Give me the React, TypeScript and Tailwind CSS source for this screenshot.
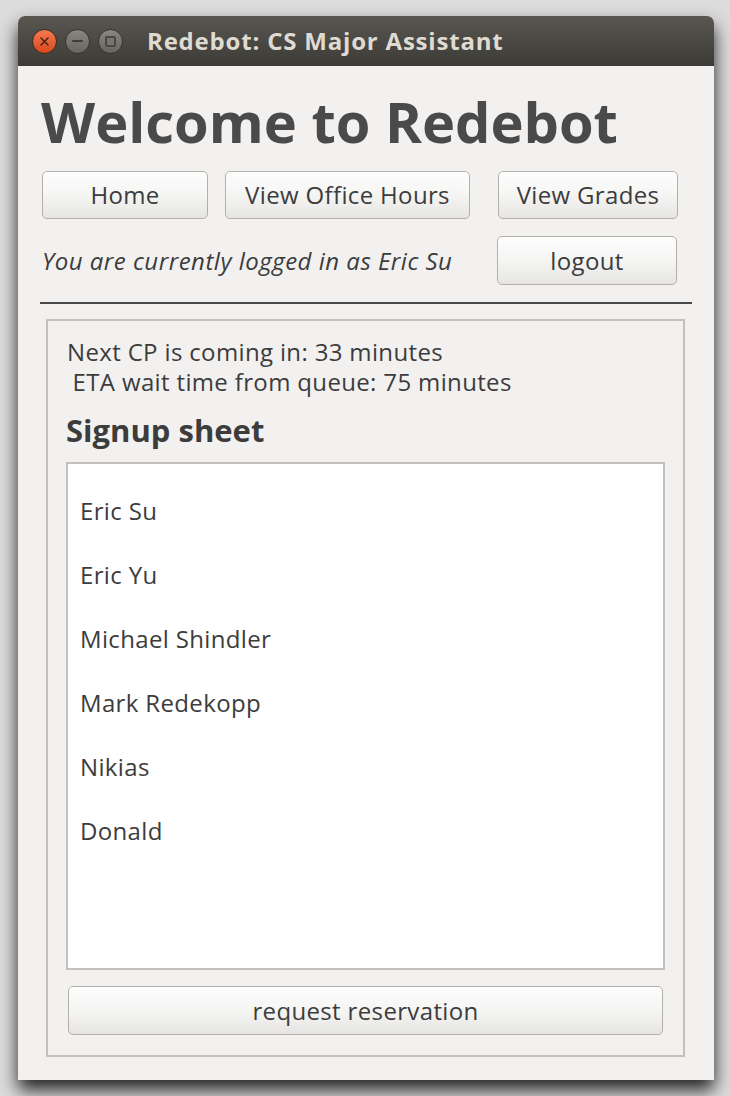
import React from 'react';

const names = ['Eric Su', 'Eric Yu', 'Michael Shindler', 'Mark Redekopp', 'Nikias', 'Donald'];

function GtkButton({ label, className }: { label: string; className?: string }) {
  return (
    <button
      type="button"
      className={
        'flex items-center justify-center rounded-[5px] border border-[#b3b0ab] bg-gradient-to-b from-[#fdfdfd] via-[#f5f5f4] to-[#e6e5e3] text-[24px] tracking-[0.35px] text-[#3c3c3c] shadow-[inset_0_1px_0_#ffffff] ' +
        (className ?? '')
      }
    >
      {label}
    </button>
  );
}

function WindowControls() {
  return (
    <div className="flex items-center gap-[8px]">
      <div className="flex h-[25px] w-[25px] items-center justify-center rounded-full border border-[#3a2a22] bg-gradient-to-b from-[#f47a50] to-[#d9461a]">
        <svg width="11" height="11" viewBox="0 0 11 11">
          <path d="M2 2 L9 9 M9 2 L2 9" stroke="#4a2515" strokeWidth="1.6" strokeLinecap="round" />
        </svg>
      </div>
      <div className="flex h-[25px] w-[25px] items-center justify-center rounded-full border border-[#34332f] bg-gradient-to-b from-[#8a8780] to-[#67655f]">
        <div className="h-[2px] w-[11px] rounded bg-[#3e3d39]" />
      </div>
      <div className="flex h-[25px] w-[25px] items-center justify-center rounded-full border border-[#34332f] bg-gradient-to-b from-[#8a8780] to-[#67655f]">
        <div className="h-[11px] w-[11px] rounded-[2px] border-2 border-[#4a4844] bg-[#77756f]" />
      </div>
    </div>
  );
}

export default function App() {
  return (
    <div className="h-[1096px] w-[730px] overflow-hidden bg-[#dcdcdc] pl-[18px] pt-[16px] font-['Open_Sans',sans-serif]">
      <div className="flex h-[1064px] w-[696px] flex-col overflow-hidden rounded-t-[7px] bg-[#f2f1f0] shadow-[0_10px_18px_rgba(0,0,0,0.85)]">
        {/* title bar */}
        <div className="flex h-[50px] shrink-0 items-center bg-gradient-to-b from-[#5a5751] to-[#3c3b37] pl-[14px]">
          <WindowControls />
          <span className="ml-[24px] text-[24px] font-bold tracking-[0.8px] text-[#dfdbd2]">
            Redebot: CS Major Assistant
          </span>
        </div>

        <div className="flex flex-col px-[22px]">
          <h1 className="mt-[20px] ml-[1px] h-[70px] text-[56px] font-bold leading-[70px] text-[#4a4a4a]">
            Welcome to Redebot
          </h1>

          <div className="mt-[15px] flex h-[48px] items-stretch">
            <GtkButton label="Home" className="ml-[2px] w-[166px]" />
            <GtkButton label="View Office Hours" className="ml-[17px] w-[245px]" />
            <GtkButton label="View Grades" className="ml-[28px] w-[180px]" />
          </div>

          <div className="mt-[17px] flex h-[49px] items-center justify-between">
            <span className="ml-[2px] text-[24px] italic tracking-[0.5px] text-[#3c3c3c]">
              You are currently logged in as Eric Su
            </span>
            <GtkButton label="logout" className="mr-[15px] h-[49px] w-[180px]" />
          </div>

          <div className="mt-[17px] h-[2px] bg-[#4a4a4a]" />

          <div className="mt-[15px] ml-[6px] mr-[7px] flex h-[738px] flex-col border-2 border-[#c4c1bc] px-[18px]">
            <div className="mt-[16px] whitespace-pre text-[24px] leading-[30px] tracking-[0.35px] text-[#3c3c3c]">
              <div className="pl-[1px]">Next CP is coming in: 33 minutes</div>
              <div> ETA wait time from queue: 75 minutes</div>
            </div>
            <div className="mt-[13px] h-[40px] text-[31px] font-bold leading-[40px] text-[#3c3c3c]">Signup sheet</div>
            <div className="mt-[12px] flex h-[508px] flex-col border-2 border-[#c4c1bc] bg-white pt-[15px] pl-[12px]">
              {names.map(n => (
                <div key={n} className="flex h-[64px] items-center text-[24px] tracking-[0.35px] text-[#3c3c3c]">
                  {n}
                </div>
              ))}
            </div>
            <GtkButton label="request reservation" className="mt-[16px] ml-[2px] mr-[2px] h-[49px]" />
          </div>
        </div>
      </div>
    </div>
  );
}
